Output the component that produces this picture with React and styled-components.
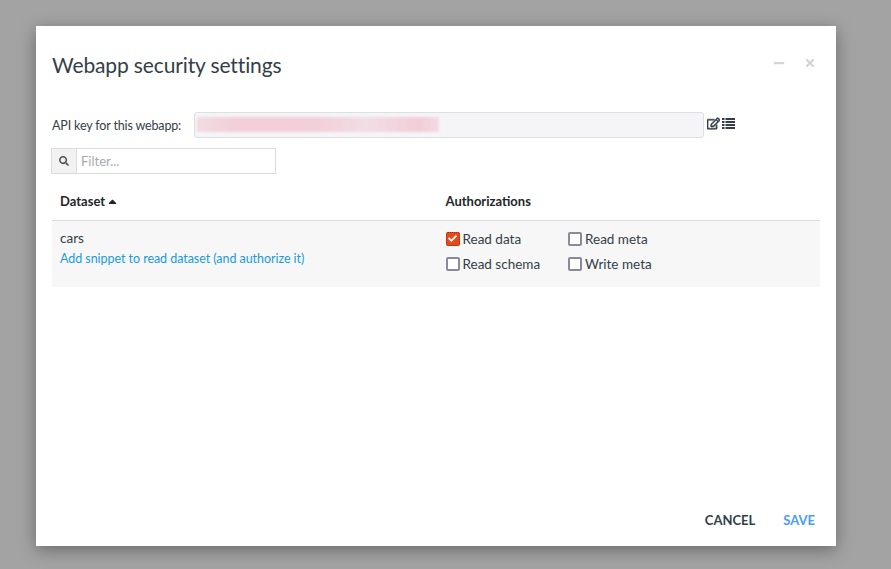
import React from "react";
import styled, { createGlobalStyle } from "styled-components";
import { FaRegEdit, FaSearch, FaTimes, FaMinus, FaCheck, FaCaretUp } from "react-icons/fa";

const GlobalStyle = createGlobalStyle`
  html, body {
    margin: 0;
    height: 100%;
    background: #a3a3a3;
    font-family: Lato, "Noto Sans", sans-serif;
    color: #333e48;
  }
`;

const Backdrop = styled.div`
  width: 891px;
  height: 569px;
  box-sizing: border-box;
  padding: 26px 0 0 36px;
  overflow: hidden;
`;

const Modal = styled.div`
  width: 800px;
  height: 520px;
  background: #fff;
  box-shadow: 0 4px 16px rgba(0, 0, 0, 0.35);
  display: flex;
  flex-direction: column;
  box-sizing: border-box;
  padding: 0 16px;
`;

const ModalHeader = styled.div`
  height: 80px;
  display: flex;
  align-items: center;
  justify-content: space-between;
  flex: none;
`;

const Title = styled.h4`
  margin: 0 0 3px;
  font-size: 21px;
  font-weight: 400;
  letter-spacing: -0.13px;
`;

const WindowButtons = styled.div`
  display: flex;
  align-items: center;
  gap: 19px;
  padding: 0 4px 6px 0;
  color: #d5d5d5;
  font-size: 12px;
`;

const KeyRow = styled.div`
  display: flex;
  align-items: center;
  margin-top: 6px;
  height: 26px;
`;

const KeyLabel = styled.label`
  width: 142px;
  font-size: 12.5px;
  letter-spacing: -0.15px;
  white-space: nowrap;
  flex: none;
`;

const KeyField = styled.div`
  width: 510px;
  height: 26px;
  box-sizing: border-box;
  background: #f5f5f8;
  border: 1px solid #dddde2;
  border-radius: 3px;
  padding: 4px 2px;
`;

const Redacted = styled.div`
  width: 242px;
  height: 15px;
  background: linear-gradient(90deg, #f3dbe2, #f2cfd9 15%, #f2d0da 50%, #f2dde4 70%, #f2cdd8 92%, #f2dbe3);
  filter: blur(1px);
`;

const KeyActions = styled.div`
  display: flex;
  align-items: center;
  gap: 2px;
  margin: -4px 0 0 3px;
  font-size: 13px;
  color: #333e48;
`;

const EditIcon = styled(FaRegEdit)`
  stroke: currentColor;
  stroke-width: 24px;
`;

const FilterBox = styled.div`
  display: flex;
  width: 225px;
  height: 26px;
  box-sizing: border-box;
  margin: 10px 0 0 -1px;
  border: 1px solid #dcdcdc;
`;

const FilterAddon = styled.span`
  width: 24px;
  background: #f2f2f2;
  border-right: 1px solid #dcdcdc;
  display: flex;
  align-items: center;
  justify-content: center;
  font-size: 10px;
  color: #555;
`;

const FilterInput = styled.input`
  flex: 1;
  min-width: 0;
  border: 0;
  outline: 0;
  padding: 0 4px;
  font: 13px Lato, sans-serif;
  &::placeholder {
    color: #aaa;
  }
`;

const TableHead = styled.div`
  display: grid;
  grid-template-columns: 393.5px 1fr;
  height: 47px;
  box-sizing: border-box;
  padding-top: 8px;
  align-items: center;
  border-bottom: 1px solid #ddd;
  color: #22262a;
`;

const HeadCell = styled.div`
  display: flex;
  align-items: center;
  gap: 1px;
  padding-left: ${(p) => (p.$flush ? "0" : "8px")};
  font-size: 13px;
  font-weight: 700;
`;

const TableRow = styled.div`
  display: grid;
  grid-template-columns: 393.5px 1fr;
  height: 66px;
  background: #f7f7f7;
  font-size: 13.5px;
`;

const DatasetCell = styled.div`
  padding: 8px 0 0 8px;
  line-height: 19.5px;
`;

const SnippetLink = styled.a`
  display: block;
  color: #1a9bdc;
  font-size: 12.5px;
  letter-spacing: -0.05px;
`;

const AuthGrid = styled.div`
  display: grid;
  grid-template-columns: 122.5px 1fr;
  grid-auto-rows: 25px;
  padding-top: 6px;
`;

const CheckLabel = styled.label`
  display: flex;
  align-items: center;
  gap: 3px;
  font-size: 13.5px;
  margin-top: -2px;
`;

const Box = styled.span`
  width: 14px;
  height: 14px;
  box-sizing: border-box;
  flex: none;
  display: flex;
  align-items: center;
  justify-content: center;
  border-radius: 2px;
  border: 2px solid ${(p) => (p.$checked ? "#e6491a" : "#8a8a99")};
  background: ${(p) => (p.$checked ? "#e6491a" : "#fff")};
  outline: ${(p) => (p.$checked ? "1px dotted rgba(90, 30, 10, 0.6)" : "none")};
  outline-offset: -1px;
  color: #fff;
  font-size: 9px;
`;

const Footer = styled.div`
  margin-top: auto;
  height: 35px;
  flex: none;
  display: flex;
  justify-content: flex-end;
  gap: 28px;
  padding-right: 5px;
  font-size: 13px;
  font-weight: 700;
`;

const FooterButton = styled.button`
  border: 0;
  padding: 0;
  height: 18px;
  background: none;
  font: inherit;
  color: ${(p) => (p.$primary ? "#4a9ef0" : "#333e48")};
`;

const ListIcon = () => (
  <svg width="13" height="11" viewBox="0 0 13 11" fill="currentColor">
    <rect x="0" y="0" width="2.5" height="2" />
    <rect x="3.5" y="0" width="9.5" height="2" />
    <rect x="0" y="3" width="2.5" height="2" />
    <rect x="3.5" y="3" width="9.5" height="2" />
    <rect x="0" y="6" width="2.5" height="2" />
    <rect x="3.5" y="6" width="9.5" height="2" />
    <rect x="0" y="9" width="2.5" height="2" />
    <rect x="3.5" y="9" width="9.5" height="2" />
  </svg>
);

const authorizations = [
  ["Read data", true],
  ["Read meta", false],
  ["Read schema", false],
  ["Write meta", false],
];

export default function App() {
  return (
    <Backdrop>
      <GlobalStyle />
      <Modal>
        <ModalHeader>
          <Title>Webapp security settings</Title>
          <WindowButtons>
            <FaMinus />
            <FaTimes />
          </WindowButtons>
        </ModalHeader>
        <KeyRow>
          <KeyLabel>API key for this webapp:</KeyLabel>
          <KeyField>
            <Redacted />
          </KeyField>
          <KeyActions>
            <EditIcon />
            <ListIcon />
          </KeyActions>
        </KeyRow>
        <FilterBox>
          <FilterAddon>
            <FaSearch />
          </FilterAddon>
          <FilterInput placeholder="Filter..." />
        </FilterBox>
        <TableHead>
          <HeadCell>
            Dataset
            <FaCaretUp size={13} />
          </HeadCell>
          <HeadCell $flush>Authorizations</HeadCell>
        </TableHead>
        <TableRow>
          <DatasetCell>
            cars
            <SnippetLink>Add snippet to read dataset (and authorize it)</SnippetLink>
          </DatasetCell>
          <AuthGrid>
            {authorizations.map(([name, on]) => (
              <CheckLabel key={name}>
                <Box $checked={on}>{on && <FaCheck />}</Box>
                {name}
              </CheckLabel>
            ))}
          </AuthGrid>
        </TableRow>
        <Footer>
          <FooterButton>CANCEL</FooterButton>
          <FooterButton $primary>SAVE</FooterButton>
        </Footer>
      </Modal>
    </Backdrop>
  );
}
